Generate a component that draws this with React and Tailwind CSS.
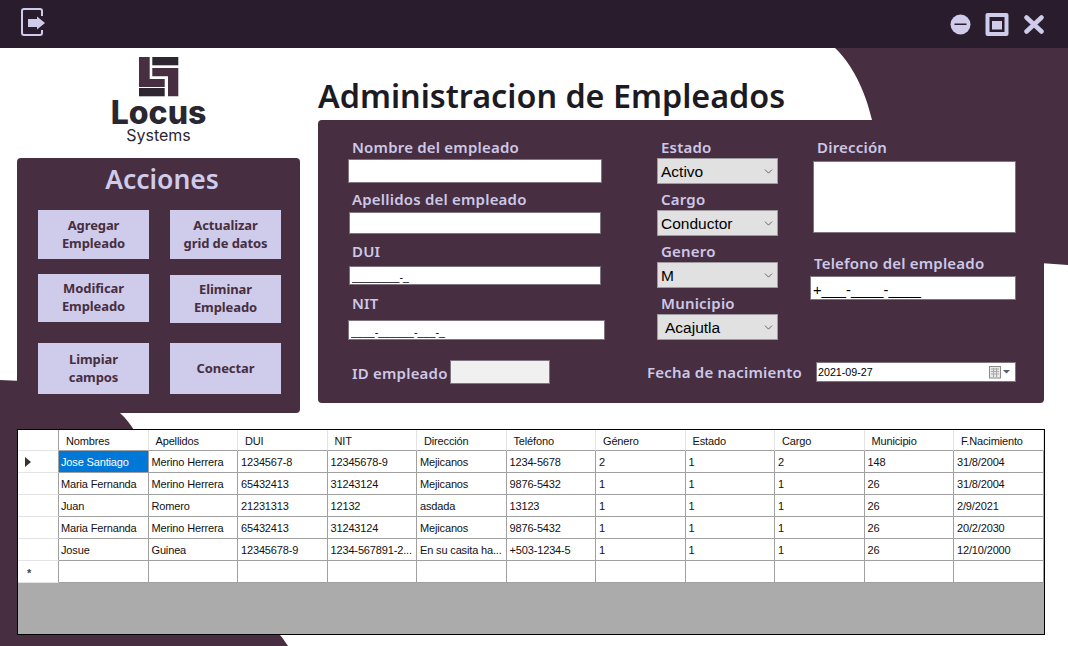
import React from 'react';
import { ChevronDown } from 'lucide-react';

const COLS = ['Nombres', 'Apellidos', 'DUI', 'NIT', 'Dirección', 'Teléfono', 'Género', 'Estado', 'Cargo', 'Municipio', 'F.Nacimiento'];

const ROWS = [
  ['Jose Santiago', 'Merino Herrera', '1234567-8', '12345678-9', 'Mejicanos', '1234-5678', '2', '1', '2', '148', '31/8/2004'],
  ['Maria Fernanda', 'Merino Herrera', '65432413', '31243124', 'Mejicanos', '9876-5432', '1', '1', '1', '26', '31/8/2004'],
  ['Juan', 'Romero', '21231313', '12132', 'asdada', '13123', '1', '1', '1', '26', '2/9/2021'],
  ['Maria Fernanda', 'Merino Herrera', '65432413', '31243124', 'Mejicanos', '9876-5432', '1', '1', '1', '26', '20/2/2030'],
  ['Josue', 'Guinea', '12345678-9', '1234-567891-2...', 'En su casita ha...', '+503-1234-5', '1', '1', '1', '26', '12/10/2000'],
  ['', '', '', '', '', '', '', '', '', '', ''],
];

const labelCls = "h-5 leading-5 text-[15px] font-semibold tracking-[0.2px] text-[#cdc8e8] whitespace-nowrap font-['Noto_Sans',sans-serif]";
const inputCls = "block bg-white border border-[#7f7582] px-[2px] pt-[3px] text-black outline-none font-['Liberation_Sans',sans-serif]";

function ExitIcon() {
  return (
    <svg width="27" height="32" viewBox="0 0 27 32" fill="none">
      <path d="M22 8V3Q22 1 20 1H4Q2 1 2 3V25Q2 27 4 27H20Q22 27 22 25V22" stroke="#cfcbea" strokeWidth="2" />
      <path d="M8 11H17V8.500L25 15L17 21.500V19H8Z" fill="#cfcbea" />
    </svg>
  );
}

function WindowButtons() {
  return (
    <div className="flex items-center mr-[24px]">
      <svg width="21" height="21" viewBox="0 0 21 21" className="mr-[14px]">
        <circle cx="10.500" cy="10.500" r="10" fill="#cfcbea" />
        <rect x="4.500" y="9.500" width="12" height="1.500" fill="#291d2d" />
      </svg>
      <svg width="24" height="23" viewBox="0 0 24 23" className="mr-[15px]">
        <rect x="0.500" width="23" height="23" rx="2" fill="#cfcbea" />
        <rect x="4.500" y="4" width="15" height="15" fill="#291d2d" />
        <rect x="7" y="8" width="10" height="8.500" fill="#cfcbea" />
      </svg>
      <svg width="20" height="19" viewBox="0 0 20 19">
        <path d="M2.500 2.500L17.500 16.500M17.500 2.500L2.500 16.500" stroke="#cfcbea" strokeWidth="4.500" strokeLinecap="round" />
      </svg>
    </div>
  );
}

function LocusLogo() {
  return (
    <div className="h-[110px] flex flex-col items-center pt-[9px]">
      <svg width="40" height="40" viewBox="0 0 40 40" className="shrink-0">
        <path d="M0 0H10.700V22H25.700V30H0Z" fill="#472e40" />
        <path d="M13.300 0H39.300V8.300H13.300Z" fill="#2e2630" />
        <path d="M13.300 11H39.300V39.300H29V19.300H13.300Z" fill="#472e40" />
        <path d="M0 31H25.700V39.300H0Z" fill="#2e2630" />
      </svg>
      <div className="mt-[1px] h-[30px] leading-[30px] text-[32px] font-extrabold text-[#2b2730] font-['Inter',sans-serif]">Locus</div>
      <div className="mt-[-2px] h-[18px] leading-[18px] text-[16px] text-[#2b2730] font-['Inter',sans-serif]">Systems</div>
    </div>
  );
}

function ActionButton({ className, children }) {
  return (
    <button className={`w-[111px] flex items-center justify-center text-center pb-[2px] bg-[#cfcbea] text-[#472e40] text-[13px] font-bold leading-[18px] tracking-[-0.1px] font-['Noto_Sans',sans-serif] ${className}`}>
      <span>{children}</span>
    </button>
  );
}

function Acciones() {
  return (
    <div className="w-[283px] h-[255px] rounded-[4px] bg-[#472e40]">
      <div className="h-[52px] flex justify-center pl-[7px] pt-[3px] leading-[36px] text-[26.500px] font-semibold text-[#cfcbea] font-['Noto_Sans',sans-serif]">Acciones</div>
      <div className="flex gap-[21px] pl-[21px]">
        <div className="flex flex-col">
          <ActionButton className="h-[49px]">Agregar<br />Empleado</ActionButton>
          <ActionButton className="h-[48px] mt-[15px]">Modificar<br />Empleado</ActionButton>
          <ActionButton className="h-[51px] mt-[21px]">Limpiar<br />campos</ActionButton>
        </div>
        <div className="flex flex-col">
          <ActionButton className="h-[49px]">Actualizar<br />grid de datos</ActionButton>
          <ActionButton className="h-[48px] mt-[16px]">Eliminar<br />Empleado</ActionButton>
          <ActionButton className="h-[51px] mt-[20px]">Conectar</ActionButton>
        </div>
      </div>
    </div>
  );
}

function Combo({ value, className, textClass = 'pl-[3px]' }) {
  return (
    <div className={`w-[121px] h-[26px] flex items-center justify-between bg-[#e1e1e1] border border-[#a09aa2] pr-[2px] text-[15.500px] text-black font-['Liberation_Sans',sans-serif] ${className}`}>
      <span className={`pt-[2px] ${textClass}`}>{value}</span>
      <ChevronDown size={13} strokeWidth={1.300} color="#333" />
    </div>
  );
}

function DatePicker() {
  return (
    <div className="w-[200px] h-[20px] mt-[2px] ml-[12px] flex items-center justify-between bg-white border border-[#7f7582] pl-[1px] pr-[4px] text-[10.700px] text-black font-['Liberation_Sans',sans-serif]">
      <span>2021-09-27</span>
      <svg width="23" height="14" viewBox="0 0 23 14">
        <rect x="1.500" y="1.500" width="11" height="11.500" fill="#e8e8e8" stroke="#8b8b8b" />
        <path d="M3 4H11M3 6.500H11M3 9H11M5.500 3V12M8.500 3V12" stroke="#a8a8a8" strokeWidth="1" />
        <path d="M15 5H22L18.500 8.500Z" fill="#50606f" />
      </svg>
    </div>
  );
}

function EmpleadoForm() {
  return (
    <div className="w-[726px] h-[283px] rounded-[4px] bg-[#472e40] pt-[17px] pl-[30px]">
      <div className="flex">
        <div className="w-[257px]">
          <div className={`${labelCls} ml-[4px]`}>Nombre del empleado</div>
          <input readOnly className={`${inputCls} w-[254px] h-[24px] mt-[2px]`} />
          <div className={`${labelCls} ml-[4px] mt-[6px]`}>Apellidos del empleado</div>
          <input readOnly className={`${inputCls} w-[252px] h-[22px] ml-[1px] mt-[3px]`} />
          <div className={`${labelCls} ml-[4px] mt-[7px]`}>DUI</div>
          <input readOnly value="________-_" className={`${inputCls} w-[252px] h-[19px] ml-[1px] mt-[5px] text-[10.700px]`} />
          <div className={`${labelCls} ml-[4px] mt-[8px]`}>NIT</div>
          <input readOnly value="____-______-___-_" className={`${inputCls} w-[257px] h-[20px] mt-[7px] text-[10.700px]`} />
        </div>
        <div className="w-[121px] ml-[52px]">
          <div className={`${labelCls} ml-[4px]`}>Estado</div>
          <Combo value="Activo" className="mt-[1px]" />
          <div className={`${labelCls} ml-[4px] mt-[5px]`}>Cargo</div>
          <Combo value="Conductor" className="mt-[1px]" />
          <div className={`${labelCls} ml-[4px] mt-[5px]`}>Genero</div>
          <Combo value="M" className="mt-[1px]" />
          <div className={`${labelCls} ml-[4px] mt-[5px]`}>Municipio</div>
          <Combo value="Acajutla" className="mt-[1px]" textClass="pl-[7px]" />
        </div>
        <div className="w-[206px] ml-[32px]">
          <div className={`${labelCls} ml-[7px]`}>Dirección</div>
          <textarea readOnly className="block w-[203px] h-[72px] ml-[3px] mt-[4px] bg-white border border-[#7f7582] resize-none outline-none" />
          <div className={`${labelCls} ml-[4px] mt-[20px]`}>Telefono del empleado</div>
          <input readOnly value="+___-____-____" className={`${inputCls} w-[206px] h-[24px] mt-[3px] text-[14.670px]`} />
        </div>
      </div>
      <div className="flex items-start mt-[20px]">
        <div className={`${labelCls} ml-[4px] mt-[3px] w-[98px]`}>ID empleado</div>
        <input readOnly className="block w-[100px] h-[24px] bg-[#f0f0f0] border border-[#7f7582] outline-none" />
        <div className={`${labelCls} ml-[97px] mt-[2px] w-[157px]`}>Fecha de nacimiento</div>
        <DatePicker />
      </div>
    </div>
  );
}

function Grid() {
  const cols = 'grid grid-cols-[41px_repeat(11,89.500px)]';
  return (
    <div className="w-[1028px] h-[206px] ml-[17px] mt-[16px] flex flex-col border border-black bg-[#ababab] text-[11px] tracking-[-0.15px] text-[#111] font-['Liberation_Sans',sans-serif]">
      <div className={`${cols} h-[21px] bg-white`}>
        <div className="border-r border-b border-r-[#a0a0a0] border-b-[#e3e3e3]" />
        {COLS.map((c) => (
          <div key={c} className="pl-[7px] pt-[3px] border-r border-b border-r-[#e3e3e3] border-b-[#a0a0a0] whitespace-nowrap">{c}</div>
        ))}
      </div>
      {ROWS.map((row, i) => (
        <div key={i} className={`${cols} h-[22px] bg-white`}>
          <div className="flex items-center border-r border-b border-r-[#a0a0a0] border-b-[#e3e3e3]">
            {i === 0 && (
              <svg width="6" height="10" viewBox="0 0 6 10" className="ml-[7px]">
                <path d="M0 0L6 5L0 10Z" fill="#333" />
              </svg>
            )}
            {i === 5 && <span className="ml-[9px] pt-[3px] text-[11px] font-bold text-[#444]">*</span>}
          </div>
          {row.map((cell, j) => (
            <div
              key={j}
              className={`pt-[3px] border-r border-b border-[#a0a0a0] whitespace-nowrap overflow-hidden ${j === 0 ? 'pl-[2px]' : 'pl-[3px]'} ${i === 0 && j === 0 ? 'bg-[#0078d7] text-white' : ''}`}
            >
              {cell}
            </div>
          ))}
        </div>
      ))}
    </div>
  );
}

export default function App() {
  return (
    <div className="relative w-[1068px] h-[646px] overflow-hidden bg-white">
      {/* formas de fondo */}
      <svg width="1068" height="646" viewBox="0 0 1068 646" className="absolute inset-0">
        <path d="M835 48H1068V265L1040 263V130H872V120C865 90 852 64 835 48Z" fill="#472e40" />
        <path d="M0 380L22 381V408H120V413C126 418 130 424 134 430L280 635C283 638 285 642 288 646H0Z" fill="#472e40" />
      </svg>

      <div className="relative flex flex-col">
        <div className="h-12 flex items-center justify-between bg-[#291d2d] pl-[20px]">
          <ExitIcon />
          <WindowButtons />
        </div>

        <div className="flex">
          <div className="w-[283px] ml-[17px]">
            <LocusLogo />
            <Acciones />
          </div>
          <div className="ml-[18px]">
            <div className="h-[72px] pt-[24px] leading-[46px] text-[32.300px] font-semibold text-[#1c1a22] whitespace-nowrap font-['Noto_Sans',sans-serif]">
              Administracion de Empleados
            </div>
            <EmpleadoForm />
          </div>
        </div>

        <Grid />
      </div>
    </div>
  );
}
